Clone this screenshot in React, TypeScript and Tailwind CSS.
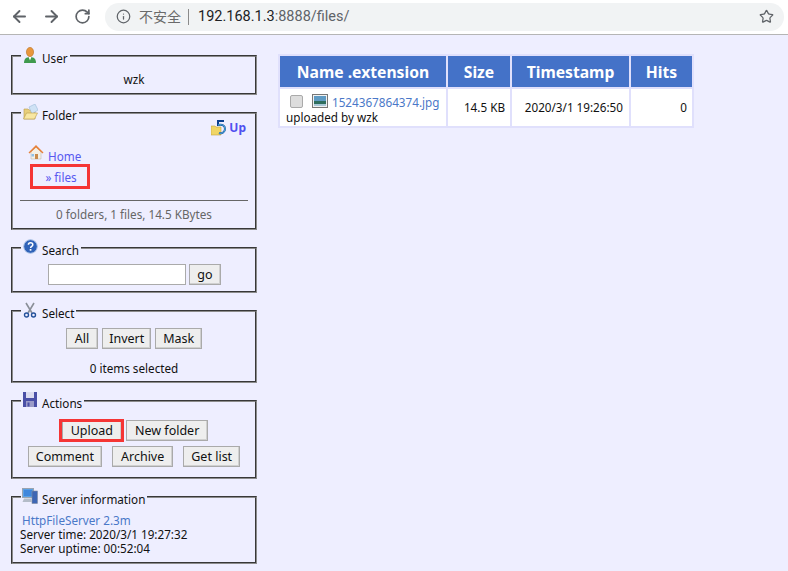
import { ReactNode } from "react";
import { ArrowLeft, ArrowRight, RotateCw, Info, Star } from "lucide-react";

const font = "font-['Noto_Sans',sans-serif]";

function UserIcon() {
  return (
    <svg width="14" height="16" viewBox="0 0 14 16">
      <ellipse cx="7" cy="5" rx="3.6" ry="4.6" fill="#e8963c" stroke="#b8701f" strokeWidth="0.6" />
      <path d="M1 16c0-4 2-6 6-6s6 2 6 6z" fill="#3f9a4e" />
      <path d="M5.5 10h3L7 13.5z" fill="#fff" />
    </svg>
  );
}

function FolderIcon() {
  return (
    <svg width="15" height="16" viewBox="0 0 15 16">
      <path d="M1 5h4l1 1h6v9H1z" fill="#e8cf7c" stroke="#b89c4a" strokeWidth="0.6" />
      <path d="M6 3l6-3 3 6-6 4z" fill="#cfe2f5" stroke="#8fb0d0" strokeWidth="0.5" />
      <path d="M0.5 15l3-6h11l-3 6z" fill="#f8e7a2" stroke="#b89c4a" strokeWidth="0.6" />
    </svg>
  );
}

function UpIcon() {
  return (
    <svg width="16" height="18" viewBox="0 0 16 18">
      <path d="M0 7h4l1 1h5v8H0z" fill="#f0d565" stroke="#c4a63e" strokeWidth="0.6" />
      <path d="M13 2H7v5M7 6c5-1 7 1 7 4s-3 5-6 4" fill="none" stroke="#0a3f90" strokeWidth="2" />
      <path d="M7 6c5-1 7 1 7 4s-3 5-6 4" fill="none" stroke="#6fe0ff" strokeWidth="0.8" />
    </svg>
  );
}

function HomeIcon() {
  return (
    <svg width="16" height="16" viewBox="0 0 16 16">
      <path d="M3 8v7h10V8L8 3z" fill="#f4f0e6" stroke="#b9b3a3" strokeWidth="0.5" />
      <path d="M0.5 8.5L8 1l7.5 7.5-1 1L8 3.5 1.5 9.5z" fill="#e6813a" />
      <rect x="7" y="10" width="3" height="5" fill="#c98b4d" />
      <rect x="3.5" y="10" width="2.5" height="2.5" fill="#8fc0e8" />
    </svg>
  );
}

function HelpIcon() {
  return (
    <svg width="15" height="15" viewBox="0 0 15 15">
      <circle cx="7.5" cy="7.5" r="6.8" fill="#2f62b8" stroke="#a9c0e4" strokeWidth="1" />
      <path d="M5.4 5.8c0-1.3 1-2 2.2-2s2.2.7 2.2 1.9c0 1.6-2.2 1.6-2.2 3.2" fill="none" stroke="#fff" strokeWidth="1.5" />
      <rect x="6.7" y="10" width="1.7" height="1.7" fill="#fff" />
    </svg>
  );
}

function ScissorsIcon() {
  return (
    <svg width="14" height="16" viewBox="0 0 14 16">
      <path d="M3 1l6 10M11 1L5 11" stroke="#8a8f98" strokeWidth="1.6" fill="none" />
      <circle cx="3.5" cy="13" r="2" fill="none" stroke="#23509a" strokeWidth="1.4" />
      <circle cx="10.5" cy="13" r="2" fill="none" stroke="#23509a" strokeWidth="1.4" />
    </svg>
  );
}

function SaveIcon() {
  return (
    <svg width="14" height="15" viewBox="0 0 14 15">
      <path d="M0 0h14v15H0z" fill="#4a4fa6" />
      <rect x="3" y="0" width="8" height="6" fill="#dcdcf0" />
      <rect x="3" y="9" width="8" height="6" fill="#9b9bc8" />
      <rect x="4.5" y="10.5" width="2" height="4" fill="#4a4fa6" />
    </svg>
  );
}

function ServerIcon() {
  return (
    <svg width="16" height="16" viewBox="0 0 16 16" className="-ml-[1px]">
      <rect x="0.5" y="0.5" width="11" height="9" fill="#5aa0e6" stroke="#9aa3b0" strokeWidth="1" />
      <rect x="2" y="2" width="8" height="6" fill="#3f86dc" />
      <rect x="10" y="3" width="5.5" height="12.5" fill="#3e66b4" stroke="#7f8b9d" strokeWidth="0.6" />
      <path d="M2 10.5h7.5l.5 3.5H0.5z" fill="#b4bcc8" />
    </svg>
  );
}

function PictureIcon() {
  return (
    <svg width="16" height="14" viewBox="0 0 16 14">
      <rect x="0.5" y="0.5" width="15" height="13" fill="#f2f2f2" stroke="#777" />
      <rect x="2" y="2" width="12" height="5" fill="#5f9bc4" />
      <rect x="2" y="7" width="12" height="3" fill="#2f6f5f" />
      <rect x="2" y="10" width="12" height="2" fill="#a8c8d8" />
    </svg>
  );
}

function Box({ icon, title, className, children }: { icon: ReactNode; title: string; className: string; children: ReactNode }) {
  return (
    <fieldset className={`border-2 [border-style:groove] border-[#8c8c8c] ${className}`}>
      <legend className="ml-[8px] pr-[2px] h-[18px] flex">
        <span className="w-[21px] pl-[2px] h-[16px] block">{icon}</span>
        <span className="text-[11.7px] leading-[14px] mt-[4px] text-[#111]">{title}</span>
      </legend>
      {children}
    </fieldset>
  );
}

function Btn({ children, className = "px-[7px]" }: { children: ReactNode; className?: string }) {
  return (
    <button className={`h-[21px] text-[12.5px] leading-[17px] text-[#111] bg-[#eeeeee] border border-[#aaaaaa] shadow-[inset_-1px_-1px_0_#d0d0d0] ${className}`}>
      {children}
    </button>
  );
}

export default function App() {
  return (
    <div className={`${font} h-[571px] w-[788px] overflow-hidden bg-[#eeeeff] text-[11.7px] text-[#111]`}>
      <header className="flex items-center h-[35px] pb-[1px] bg-white border-b border-[#b5b5b5]">
        <div className="flex items-center w-[105px] text-[#5f6368]">
          <ArrowLeft className="ml-[10px]" size={19} strokeWidth={2.4} />
          <ArrowRight className="ml-[13px]" size={19} strokeWidth={2.4} />
          <RotateCw className="ml-[13px]" size={17} strokeWidth={2.4} />
        </div>
        <div className="flex items-center w-[679px] h-[28px] rounded-full bg-[#f1f3f4] text-[#5f6368]">
          <Info className="ml-[11px]" size={15} strokeWidth={2} />
          <span className="ml-[8px] text-[14px] text-[#6a6a6a] font-['Noto_Sans_CJK_SC',sans-serif]">不安全</span>
          <span className="ml-[7px] w-px h-[16px] bg-[#8a8a8a]" />
          <span className="ml-[9px] text-[14.5px] font-['Roboto',sans-serif]">
            <span className="text-[#202124]">192.168.1.3</span>:8888/files/
          </span>
          <Star className="ml-auto mr-[10px]" size={15} strokeWidth={2} />
        </div>
      </header>

      <main className="flex items-start">
        <aside className="ml-[11px] mt-[12px] w-[246px] flex flex-col gap-[9px]">
          <Box icon={<UserIcon />} title="User" className="h-[48px]">
            <p className="text-center leading-[16px] mt-[6px]">wzk</p>
          </Box>

          <Box icon={<FolderIcon />} title="Folder" className="h-[126px]">
            <div className="px-[7px]">
              <div className="flex justify-end items-center h-[18px] -mt-[3px] mr-[2px]">
                <UpIcon />
                <a className="ml-[2px] text-[12px] font-bold text-[#5050f0]">Up</a>
              </div>
              <div className="flex items-start mt-[7px] ml-[8px] h-[17px]">
                <HomeIcon />
                <a className="ml-[4px] mt-[4px] leading-[16px] text-[#5858f0]">Home</a>
              </div>
              <div className="mt-[3px] ml-[10px] w-[60px] h-[25px] pl-[2px] border-[3px] border-[#f53535] flex items-center justify-center">
                <a className="leading-[16px] text-[#5858f0]">» files</a>
              </div>
              <hr className="mt-[11px] border-t border-[#666]" />
              <p className="mt-[5px] text-center leading-[16px] text-[#666]">0 folders, 1 files, 14.5 KBytes</p>
            </div>
          </Box>

          <Box icon={<HelpIcon />} title="Search" className="h-[54px]">
            <div className="flex justify-center items-center gap-[3px] mt-[7px] pl-[1px]">
              <input className="w-[138px] h-[21px] bg-white border border-[#aaaaaa]" />
              <Btn>go</Btn>
            </div>
          </Box>

          <Box icon={<ScissorsIcon />} title="Select" className="h-[81px]">
            <div className="flex justify-center gap-[4px] mt-[8px]">
              <Btn className="px-[8px]">All</Btn>
              <Btn className="px-[6px]">Invert</Btn>
              <Btn className="px-[7px]">Mask</Btn>
            </div>
            <p className="mt-[11px] text-center leading-[16px]">0 items selected</p>
          </Box>

          <Box icon={<SaveIcon />} title="Actions" className="h-[87px]">
            <div className="flex justify-center items-center gap-[4px] mt-[10px] pl-[2px]">
              <span className="relative flex">
                <Btn className="px-[8px]">Upload</Btn>
                <span className="absolute -top-[1px] -bottom-[1px] -left-[3px] -right-[2px] border-[3px] border-[#f53535]" />
              </span>
              <Btn className="px-[8px]">New folder</Btn>
            </div>
            <div className="flex justify-center gap-[10px] mt-[5px]">
              <Btn>Comment</Btn>
              <Btn className="px-[8px]">Archive</Btn>
              <Btn>Get list</Btn>
            </div>
          </Box>

          <Box icon={<ServerIcon />} title="Server information" className="h-[76px]">
            <div className="pl-[7px]">
              <a className="block ml-[2px] mt-[7px] leading-[14px] text-[#4a78c8]">HttpFileServer 2.3m</a>
              <p className="leading-[14px]">Server time: 2020/3/1 19:27:32</p>
              <p className="leading-[14px]">Server uptime: 00:52:04</p>
            </div>
          </Box>
        </aside>

        <table className="ml-[21px] mt-[19px] border-separate border-spacing-[2px] border-0 bg-[#e0e0fc] table-fixed w-[416px]">
          <thead>
            <tr className="h-[31px] text-[15.7px] font-bold text-white">
              <th className="w-[166px] pt-[3px] bg-[#4472c8]">Name .extension</th>
              <th className="w-[62px] pt-[3px] bg-[#4472c8]">Size</th>
              <th className="w-[117px] pt-[3px] bg-[#4472c8]">Timestamp</th>
              <th className="w-[61px] pt-[3px] bg-[#4472c8]">Hits</th>
            </tr>
          </thead>
          <tbody>
            <tr className="h-[37px] bg-white">
              <td className="pl-[6px] pt-[5px] leading-[15px] align-middle">
                <div className="flex items-center h-[15px]">
                  <input type="checkbox" className="ml-[4px] -mt-[3px] w-[13px] h-[13px] appearance-none rounded-[2px] bg-[#dddddd] border border-[#aaaaaa]" />
                  <span className="ml-[9px] -mt-[3px] flex">
                    <PictureIcon />
                  </span>
                  <a className="ml-[4px] text-[#4a78c8]">1524367864374.jpg</a>
                </div>
                <div>uploaded by wzk</div>
              </td>
              <td className="pr-[5px] text-right">14.5 KB</td>
              <td className="pr-[6px] text-right">2020/3/1 19:26:50</td>
              <td className="pr-[5px] text-right">0</td>
            </tr>
          </tbody>
        </table>
      </main>
    </div>
  );
}
